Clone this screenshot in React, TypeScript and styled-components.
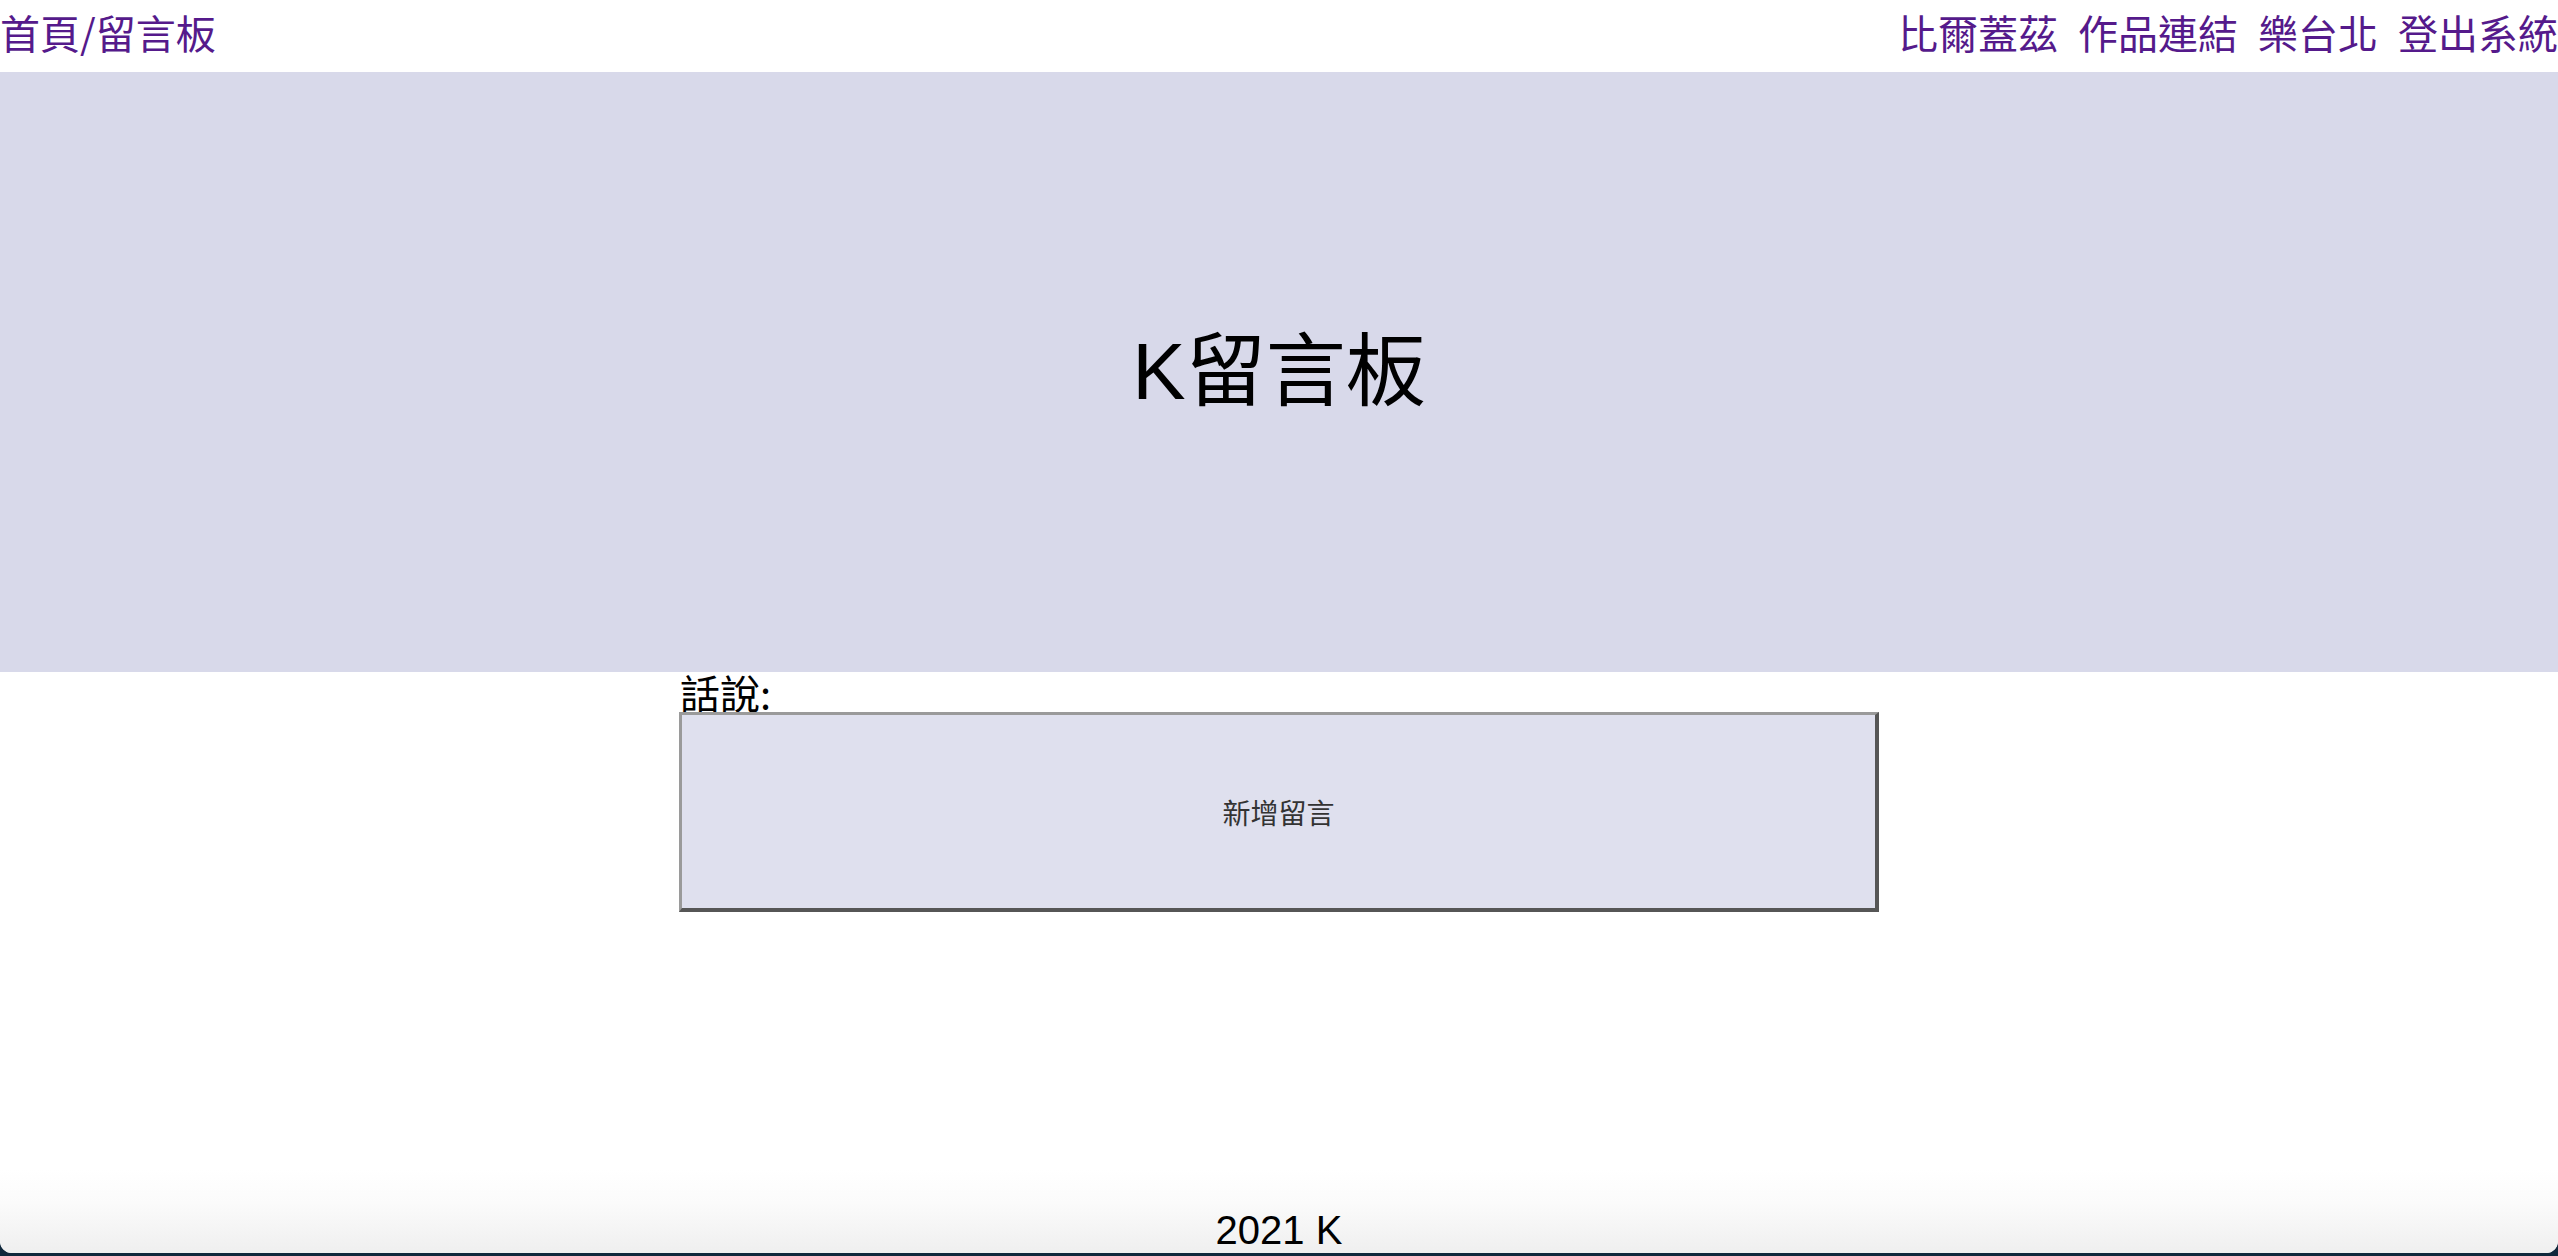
import React from "react";
import styled, { createGlobalStyle } from "styled-components";

const GlobalStyle = createGlobalStyle`
  html, body {
    margin: 0;
    padding: 0;
    background: #10283c;
  }
  body {
    font-family: "Liberation Sans", "Noto Sans CJK TC", Arial, sans-serif;
    color: #000;
  }
  * { box-sizing: border-box; }
`;

const Page = styled.div`
  display: flex;
  flex-direction: column;
  height: 1253px;
  background: #ffffff;
  border-radius: 0 0 12px 12px;
  overflow: hidden;
`;

const Nav = styled.nav`
  display: flex;
  justify-content: space-between;
  align-items: flex-start;
  height: 72px;
  padding-top: 4px;
  font-family: "Noto Sans CJK TC", "Liberation Sans", sans-serif;
  font-size: 40px;
  line-height: 56px;
`;

const NavGroup = styled.div`
  display: flex;
  gap: 20px;
  white-space: nowrap;
`;

const NavLink = styled.a`
  color: #551a8b;
  text-decoration: none;
`;

const Hero = styled.header`
  display: flex;
  align-items: center;
  justify-content: center;
  height: 600px;
  background: #d8d9ea;
`;

const Title = styled.h1`
  margin: 0;
  font-family: "Liberation Sans", "Noto Sans CJK TC", sans-serif;
  font-weight: 400;
  font-size: 80px;
  line-height: 1;
`;

const Main = styled.main`
  width: 1200px;
  margin: 0 auto;
  display: flex;
  flex-direction: column;
`;

const Label = styled.div`
  font-family: "Noto Sans CJK TC", "Liberation Sans", sans-serif;
  font-size: 40px;
  line-height: 40px;
  height: 40px;
  padding-left: 1px;
`;

const AddButton = styled.button`
  height: 200px;
  width: 100%;
  background: #dfe0ee;
  border-style: solid;
  border-width: 3px 4px 4px 3px;
  border-color: #9a9a9a #565656 #565656 #9a9a9a;
  color: #333333;
  font-family: "Noto Sans CJK TC", sans-serif;
  font-size: 28px;
  padding: 0;
  cursor: pointer;
`;

const Footer = styled.footer`
  margin-top: auto;
  height: 84px;
  display: flex;
  align-items: flex-end;
  justify-content: center;
  background: linear-gradient(#ffffff, #fbfbfb 40%, #efefef);
  font-family: "Liberation Sans", sans-serif;
  font-size: 40px;
  line-height: 46px;
`;

export default function App() {
  return (
    <>
      <GlobalStyle />
      <Page>
        <Nav>
          <NavGroup>
            <NavLink href="#">首頁/留言板</NavLink>
          </NavGroup>
          <NavGroup>
            <NavLink href="#">比爾蓋茲</NavLink>
            <NavLink href="#">作品連結</NavLink>
            <NavLink href="#">樂台北</NavLink>
            <NavLink href="#">登出系統</NavLink>
          </NavGroup>
        </Nav>
        <Hero>
          <Title>K留言板</Title>
        </Hero>
        <Main>
          <Label>話說:</Label>
          <AddButton>新增留言</AddButton>
        </Main>
        <Footer>2021 K</Footer>
      </Page>
    </>
  );
}
